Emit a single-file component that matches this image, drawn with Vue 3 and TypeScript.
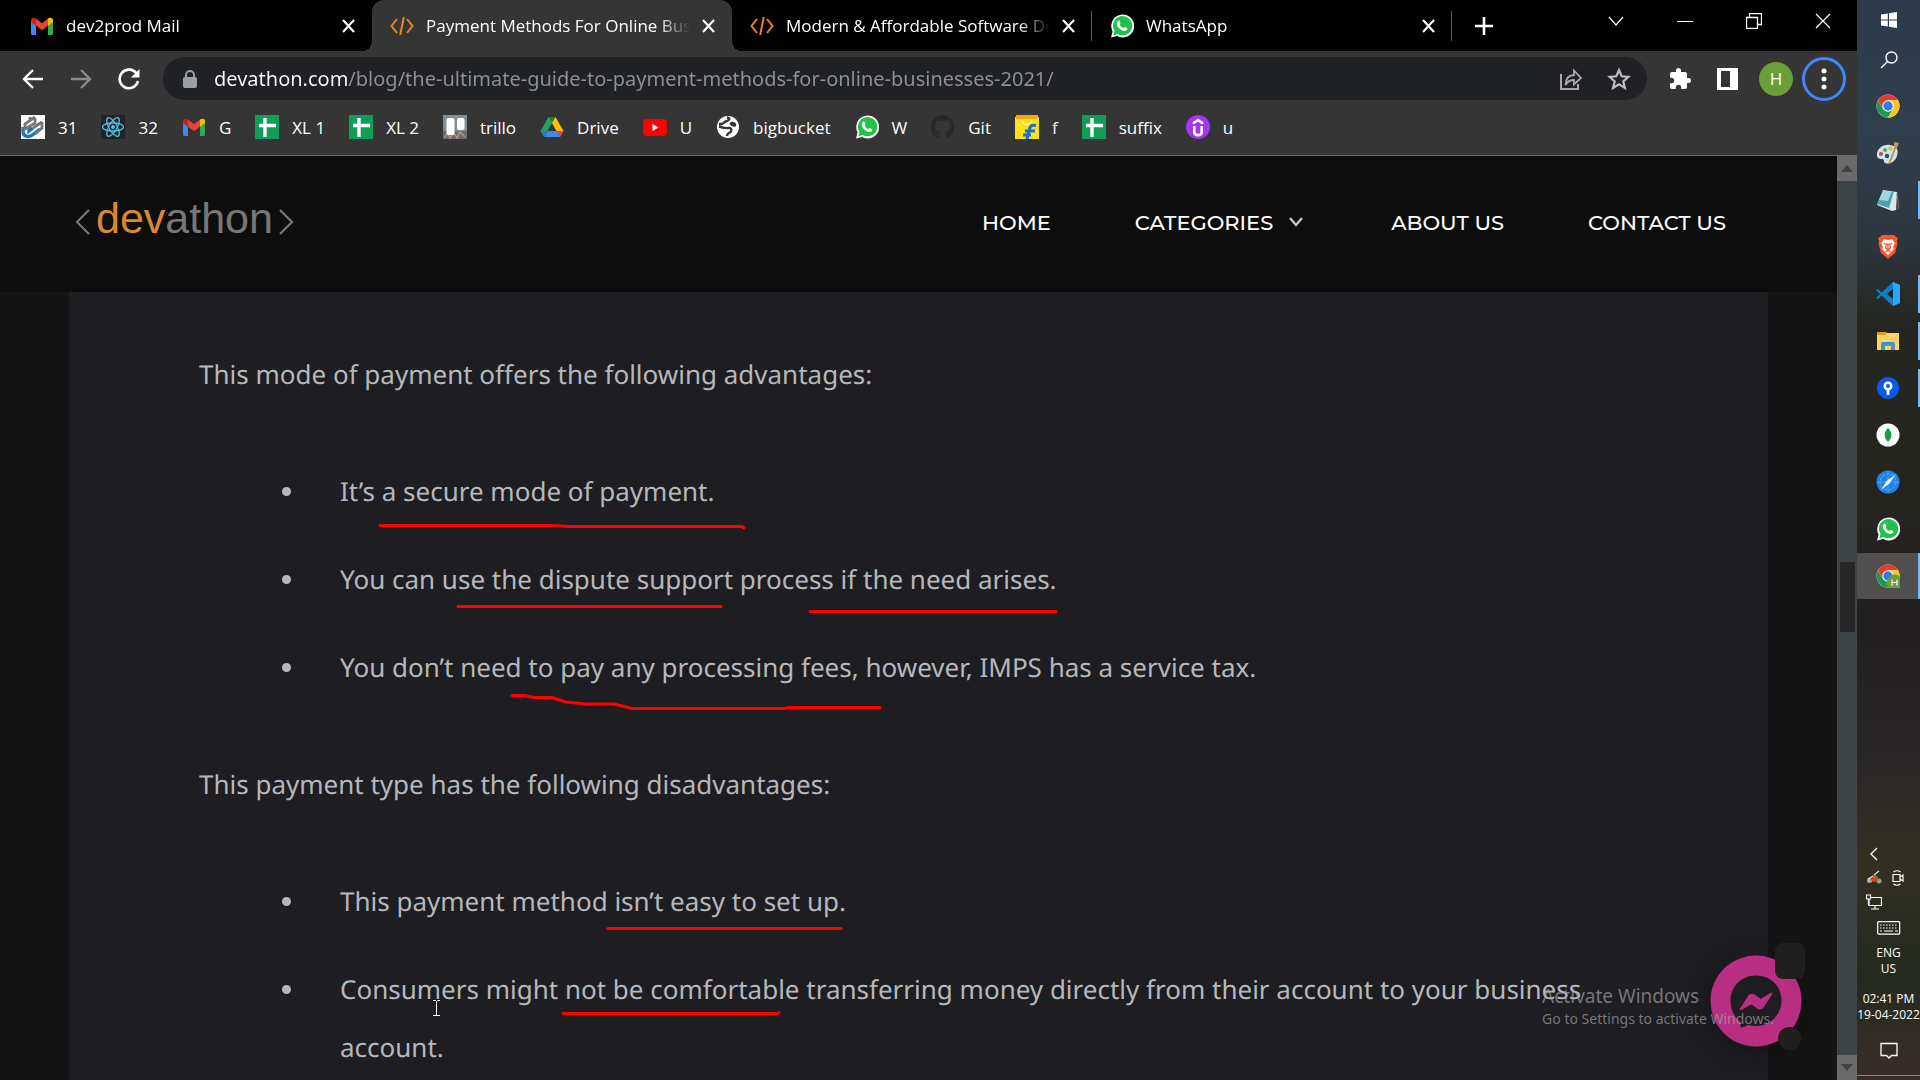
<script setup lang="ts">
import { ref } from 'vue'

interface Tab { title: string; icon: string; active?: boolean; divider?: boolean }
interface Bookmark { label: string; icon: string }
interface TaskItem { name: string; icon: string; running?: boolean; current?: boolean }

const whatsapp = '<path d="M1 23.500 2.600 17.500A11.500 11.500 0 1 1 7 22z" fill="#fff"/><path d="M3.300 21.200 4.600 17A9.600 9.600 0 1 1 7.800 20z" fill="#1fc24c"/><path d="M8 6.800c.5-.5 1.200-.5 1.500.1l.9 2c.2.5-.9 1.400-.7 1.800.7 1.500 1.900 2.600 3.500 3.300.4.200 1.300-1.300 1.800-1l2 1c.5.300.3 1.400-.1 2-2.400 2.400-6.300.1-8.300-2.200C6.800 11.700 6 8.800 8 6.800z" fill="#fff"/>'
const gmail = '<path d="M1 6v13.500c0 .8.700 1.500 1.500 1.500H6V10.500z" fill="#4285f4"/><path d="M18 10.500V21h3.500c.8 0 1.500-.7 1.500-1.500V6z" fill="#34a853"/><path d="M6 4.500v7l6 4.700 6-4.700v-7l-6 4.700z" fill="#ea4335"/><path d="M1 6v2l5 3.700V4.500C4 3 1 3.500 1 6z" fill="#c5221f"/><path d="M23 6v2l-5 3.700V4.500c2-1.500 5-1 5 1.500z" fill="#fbbc04"/>'
const code = '<path d="M7 5 1.500 12 7 19M17 5l5.500 7-5.500 7M13.800 3l-3.600 18" fill="none" stroke="#e8851c" stroke-width="2"/>'
const sheet = '<path d="M0 0h24v24H0z" fill="#109d58"/><path d="M10 3v19M4 10.500h17" stroke="#fff" stroke-width="3.400"/>'
const chrome = '<circle cx="12" cy="12" r="11.500" fill="#fff"/><path d="M12 .5a11.500 11.500 0 0 1 10 5.800H12L7 15 2 6.300A11.500 11.500 0 0 1 12 .5z" fill="#e33b2e"/><path d="M2 6.300A11.500 11.500 0 0 0 12 23.500l5-8.600-5 2.200-5-2.200z" fill="#1f9a4c"/><path d="M22 6.300A11.500 11.500 0 0 1 12 23.500l5-8.600V9l-5-2.700z" fill="#fcc31d"/><circle cx="12" cy="12" r="5.700" fill="#fff"/><circle cx="12" cy="12" r="4.700" fill="#2a7cf0"/>'

const icons: Record<string, string> = {
  whatsapp, gmail, code, sheet, chrome,
  school: '<path d="M0 0h24v24H0z" fill="#fff"/><path d="M2 12v4c0 6 6 7 10 3.500l7-5.500M8 12v4l4-3" fill="none" stroke="#2477b5" stroke-width="3.400"/><path d="M14 2 4 9v5l10-6V3M12 13l9-6M21 7v6l-7 6M9 2v4" fill="none" stroke="#77777a" stroke-width="2.800"/>',
  react: '<path d="M0 0h24v24H0z" fill="#20232a"/><circle cx="12" cy="12" r="2" fill="#53c1de"/><g fill="none" stroke="#53c1de" stroke-width="1.300"><ellipse cx="12" cy="12" rx="10.500" ry="4"/><ellipse cx="12" cy="12" rx="10.500" ry="4" transform="rotate(60 12 12)"/><ellipse cx="12" cy="12" rx="10.500" ry="4" transform="rotate(120 12 12)"/></g>',
  trello: '<path d="M0 0h24v24H0z" fill="#7f8d94"/><path d="M0 16h24v8H0z" fill="#756b62"/><path d="m2 22 3-4 2 5 4-5 3 5 3-6 5 5" fill="none" stroke="#a59a8f" stroke-width="1.500"/><rect x="3.500" y="3" width="8" height="17" rx="2" fill="#fff"/><rect x="14" y="3" width="7.500" height="12" rx="2" fill="#fff"/>',
  drive: '<path d="m8.500 2-8 14 3.500 6L12 8z" fill="#1da362"/><path d="M8.500 2h7l8 14h-7z" fill="#ffc107"/><path d="m4.500 22 3.500-6h15.500L20 22z" fill="#4285f4"/><path d="m17 16h6.500L20 22z" fill="#ea4335"/><path d="m.5 16 4 6L8 16z" fill="#2b6fe3"/><path d="m12 8-3.500-6h7z" fill="#188038"/>',
  youtube: '<rect y="4" width="24" height="17" rx="4" fill="#f00"/><path d="m9.500 9 6 3.500-6 3.500z" fill="#fff"/>',
  globe: '<circle cx="12" cy="12" r="11" fill="#fff"/><path d="M11 2.500c3 .5 3 2.500 0 3.500s-3 2-5 3l-3 0M3 11.500c3 1 6 2 9 1.500s4 1.500 3 3.500-4 1-4 4.500" fill="none" stroke="#353535" stroke-width="2.400"/><path d="M14 7.500c2-1.500 5-1 6 1.500 1 3-1 3-3 2.500s-4-2-3-4z" fill="#353535"/>',
  github: '<path d="M12 0a12 12 0 0 0-4 23.400c.6.100.8-.3.800-.6v-2.200c-3.300.7-4-1.500-4-1.500-.6-1.400-1.400-1.800-1.400-1.800-1.100-.7.100-.7.100-.7 1.200.1 1.900 1.200 1.900 1.200 1 1.900 2.800 1.300 3.500 1 .1-.8.400-1.300.8-1.600-2.700-.3-5.500-1.300-5.500-5.900 0-1.300.5-2.400 1.200-3.200 0-.3-.5-1.500.2-3.200 0 0 1-.3 3.300 1.200a11.500 11.500 0 0 1 6 0C17 4.600 18 4.900 18 4.900c.7 1.700.3 2.900.1 3.200.8.800 1.200 1.900 1.200 3.200 0 4.600-2.800 5.600-5.500 5.900.4.400.8 1.100.8 2.200v3.300c0 .3.200.7.800.6A12 12 0 0 0 12 0z" fill="#24292e"/>',
  flipkart: '<path d="M0 2h24v22H0z" fill="#fce313"/><path d="M1 0h22v4H1z" fill="#f5a80c"/><path d="M7 5c1 6 9 6 10 0" fill="none" stroke="#fff8a8" stroke-width="1.500"/><path d="M21 10.500c-5-1-6 .5-7 5.500l-2 8M10 16h10M8 20h8" fill="none" stroke="#1b6fd6" stroke-width="3"/>',
  udemy: '<circle cx="12" cy="12" r="12" fill="#a435f0"/><path d="M8.300 11v6c0 4.200 7.400 4.200 7.400 0v-6M7 8.500l5-3.500 5 3.500" fill="none" stroke="#fff" stroke-width="2.600"/>',
  windows: '<path d="M4 6.500 10.800 5.500v6H4zM12 5.300 20 4v7.500h-8zM4 12.500h6.800v6L4 17.500zM12 12.500h8V20l-8-1.300z" fill="#fff"/>',
  search: '<circle cx="14.500" cy="9.500" r="5.500" fill="none" stroke="#fff" stroke-width="1.400"/><path d="M10.500 13.500 4 20" stroke="#fff" stroke-width="1.400"/>',
  paint: '<path d="M1 15C0 8 7 3 14 4c7 1 9 5 7 11s-8 9-12 7c-2-1 0-4-3-4-2 0-4 0-5-3z" fill="#c8e3f3"/><circle cx="5" cy="13" r="2" fill="#d94040"/><circle cx="9" cy="9" r="2" fill="#58ac47"/><circle cx="14.500" cy="7.500" r="2" fill="#edb53a"/><circle cx="11" cy="15" r="2.200" fill="#30506a"/><path d="M20 5 13 23" stroke="#da8432" stroke-width="1.800"/><path d="m18 1 5 1-2 5-3-1z" fill="#bf9262"/>',
  notepad: '<path d="m7 2 14 2-1 18-4 1L1 17z" fill="#dbe6e9"/><path d="M7 3h11l-5 17L1 16z" fill="#4ba3b4"/><path d="m7 3 9 0-4 10L3 12z" fill="#a3d5dc"/><path d="m21 5 1.500 15-2 2" fill="none" stroke="#87734a"/>',
  brave: '<path d="m6 0 12 0 2 2 2 1-1 3 .5 3-2.500 9-7 6-7-6L2.500 9 3 6 2 3l2-1z" fill="#fb542b"/><path d="m8 4 4 1 4-1 3 4-2 4 1 2-6 6-6-6 1-2-2-4z" fill="#fff"/><path d="m7.500 8.500 3 1-1 3 2.500 3 2.500-3-1-3 3-1M9.500 17l2.500-1.300 2.500 1.300M12 8v7" fill="none" stroke="#fb542b" stroke-width="1.300"/>',
  vscode: '<path d="m17 0 7 3v18l-7 3L5.500 13.500 2 17 0 16l4-4-4-4 2-1 3.500 3.500z" fill="#0e7fc9"/><path d="M17 0v24l7-3V3z" fill="#28a8f2"/><path d="m17 7-6 5 6 5z" fill="#25261f"/>',
  folder: '<path d="M1 3h9l1 1h12v17H1z" fill="#fbd368"/><path d="M1 3h9v3H1z" fill="#df9c0a"/><path d="M5 21v-6q0-2 2-2h10q2 0 2 2v6h-4v-4H9v4z" fill="#3d93d4"/>',
  sourcetree: '<circle cx="12" cy="12" r="11" fill="#0b59e8"/><circle cx="12" cy="10" r="3.300" fill="none" stroke="#fff" stroke-width="2.400"/><path d="M12 14v5" stroke="#fff" stroke-width="2.800"/>',
  mongo: '<circle cx="12" cy="12" r="11.500" fill="#fff"/><path d="M12 5c5 5 4 10 0 14-4-4-5-9 0-14z" fill="#159a4e"/>',
  safari: '<circle cx="12" cy="12" r="11.500" fill="#1d82ea"/><circle cx="12" cy="12" r="8" fill="none" stroke="#6db5f5" stroke-dasharray="3 1.500"/><path d="M12 1v22M1 12h22" stroke="#54a5f2" stroke-width=".8"/><path d="m20 4-6.500 9.500L5 20l5.500-9z" fill="#e6f2fc"/>',
  chromeProfile: chrome + '<circle cx="18.500" cy="18.500" r="8" fill="#689f38"/><path d="M16 15.500v6M21 15.500v6M16 18.500h5" stroke="#fff" stroke-width="1.200"/>',
}

const tabs: Tab[] = [
  { title: 'dev2prod Mail', icon: 'gmail' },
  { title: 'Payment Methods For Online Businesses', icon: 'code', active: true },
  { title: 'Modern & Affordable Software Development', icon: 'code', divider: true },
  { title: 'WhatsApp', icon: 'whatsapp', divider: true },
]

const bookmarks: Bookmark[] = [
  { label: '31', icon: 'school' },
  { label: '32', icon: 'react' },
  { label: 'G', icon: 'gmail' },
  { label: 'XL 1', icon: 'sheet' },
  { label: 'XL 2', icon: 'sheet' },
  { label: 'trillo', icon: 'trello' },
  { label: 'Drive', icon: 'drive' },
  { label: 'U', icon: 'youtube' },
  { label: 'bigbucket', icon: 'globe' },
  { label: 'W', icon: 'whatsapp' },
  { label: 'Git', icon: 'github' },
  { label: 'f', icon: 'flipkart' },
  { label: 'suffix', icon: 'sheet' },
  { label: 'u', icon: 'udemy' },
]

const taskItems: TaskItem[] = [
  { name: 'Chrome', icon: 'chrome' },
  { name: 'Paint', icon: 'paint' },
  { name: 'Notepad', icon: 'notepad', running: true },
  { name: 'Brave', icon: 'brave' },
  { name: 'Visual Studio Code', icon: 'vscode', running: true },
  { name: 'File Explorer', icon: 'folder', running: true },
  { name: 'Sourcetree', icon: 'sourcetree', running: true },
  { name: 'MongoDB Compass', icon: 'mongo' },
  { name: 'Safari', icon: 'safari' },
  { name: 'WhatsApp', icon: 'whatsapp' },
  { name: 'Chrome, profile H', icon: 'chromeProfile', current: true },
]

const advantages = [
  'It’s a secure mode of payment.',
  'You can use the dispute support process if the need arises.',
  'You don’t need to pay any processing fees, however, IMPS has a service tax.',
]
const disadvantages = [
  'This payment method isn’t easy to set up.',
  'Consumers might not be comfortable transferring money directly from their account to your business account.',
]

const address = ref('devathon.com/blog/the-ultimate-guide-to-payment-methods-for-online-businesses-2021/')
</script>

<template>
  <div class="desktop">
    <div class="window">
      <header class="tabstrip">
        <div v-for="tab in tabs" :key="tab.title" class="tab" :class="{ active: tab.active, divider: tab.divider }">
          <svg class="icon" viewBox="0 0 24 24" v-html="icons[tab.icon]"></svg>
          <span class="tab-title">{{ tab.title }}</span>
          <button class="plain" :aria-label="'Close ' + tab.title">
            <svg width="13" height="14" viewBox="0 0 13 14"><path d="m1 1 11 12M12 1 1 13" stroke="#fff" stroke-width="2.200" /></svg>
          </button>
        </div>
        <button class="plain new-tab" aria-label="New tab">
          <svg width="18" height="18" viewBox="0 0 18 18"><path d="M9 0v18M0 9h18" stroke="#fff" stroke-width="2.600" /></svg>
        </button>
        <div class="window-controls">
          <button class="plain" aria-label="Search tabs">
            <svg width="16" height="16" viewBox="0 0 16 16"><path d="m1 4 7 8 7-8" fill="none" stroke="#fff" stroke-width="1.200" /></svg>
          </button>
          <button class="plain" aria-label="Minimize">
            <svg width="16" height="16" viewBox="0 0 16 16"><path d="M0 8.500h16" stroke="#fff" /></svg>
          </button>
          <button class="plain" aria-label="Restore">
            <svg width="16" height="16" viewBox="0 0 16 16"><path d="M.5 4.500h11v11H.5zM3.500 4V.5h12v11H12" fill="none" stroke="#fff" stroke-width="1.300" /></svg>
          </button>
          <button class="plain" aria-label="Close">
            <svg width="16" height="16" viewBox="0 0 16 16"><path d="m1 1 14 14M15 1 1 15" stroke="#fff" stroke-width="1.200" /></svg>
          </button>
        </div>
      </header>

      <div class="toolbar">
        <button class="plain tool" aria-label="Back">
          <svg width="22" height="22" viewBox="0 0 22 22"><path d="M21 11H2.500M11 2l-9 9 9 9" fill="none" stroke="#fff" stroke-width="2.400" /></svg>
        </button>
        <button class="plain tool" aria-label="Forward">
          <svg width="22" height="22" viewBox="0 0 22 22"><path d="M1 11h18.500M11 2l9 9-9 9" fill="none" stroke="#8b8b8b" stroke-width="2.400" /></svg>
        </button>
        <button class="plain tool" aria-label="Reload">
          <svg width="22" height="22" viewBox="0 0 22 22"><path d="M18.500 5.500A9.300 9.300 0 1 0 20 13" fill="none" stroke="#fff" stroke-width="2.600" /><path d="M21.500 1v8.500H13z" fill="#fff" /></svg>
        </button>
        <div class="address">
          <svg width="14" height="18" viewBox="0 0 14 18"><path d="M3 8V5a4 4 0 0 1 8 0v3" fill="none" stroke="#9aa0a6" stroke-width="2" /><rect y="7" width="14" height="11" rx="2" fill="#9aa0a6" /></svg>
          <input v-model="address" type="text" aria-label="Address" spellcheck="false" />
          <button class="plain tool" aria-label="Share">
            <svg width="24" height="24" viewBox="0 0 24 24"><path d="M2 7v15h17v-5" fill="none" stroke="#a8a8a8" stroke-width="2" /><path d="M6.500 18C7 11 10 8 15 8V3.500l7 7.500-7 6.500v-4.500c-4 0-6.500 1.500-8.500 5z" fill="none" stroke="#a8a8a8" stroke-width="1.800" /></svg>
          </button>
          <button class="plain tool" aria-label="Bookmark this page">
            <svg width="24" height="24" viewBox="0 0 24 24"><path d="m12 3 2.700 6.300 6.800.5-5.200 4.500 1.600 6.700-5.900-3.600L6.100 21l1.600-6.700L2.500 9.800l6.800-.5z" fill="none" stroke="#bdbdbd" stroke-width="2.200" /></svg>
          </button>
        </div>
        <button class="plain tool" aria-label="Extensions">
          <svg width="24" height="24" viewBox="0 0 24 24"><path d="M20.500 11H19V7a2 2 0 0 0-2-2h-4V3.500a2.500 2.500 0 0 0-5 0V5H4a2 2 0 0 0-2 2v3.800h1.500a2.700 2.700 0 0 1 0 5.400H2V20a2 2 0 0 0 2 2h3.800v-1.500a2.700 2.700 0 0 1 5.400 0V22H17a2 2 0 0 0 2-2v-4h1.500a2.500 2.500 0 0 0 0-5z" fill="#fff" /></svg>
        </button>
        <button class="plain tool" aria-label="Side panel">
          <svg width="22" height="22" viewBox="0 0 22 22"><path d="M0 0h21v22H0zM4 3v16h9V3z" fill="#fff" fill-rule="evenodd" /></svg>
        </button>
        <button class="plain tool" aria-label="Profile"><span class="avatar">H</span></button>
        <button class="plain tool" aria-label="Menu">
          <span class="menu-ring"><svg width="6" height="22" viewBox="0 0 6 22"><g fill="#fff"><circle cx="3" cy="3" r="2.500" /><circle cx="3" cy="11" r="2.500" /><circle cx="3" cy="19" r="2.500" /></g></svg></span>
        </button>
      </div>

      <nav class="bookmarks" aria-label="Bookmarks">
        <a v-for="mark in bookmarks" :key="mark.label" href="#">
          <svg class="icon" viewBox="0 0 24 24" v-html="icons[mark.icon]"></svg>
          <span>{{ mark.label }}</span>
        </a>
      </nav>

      <div class="viewport">
        <div class="page">
          <header class="site-header">
            <a class="logo" href="#">
              <svg width="16" height="28" viewBox="0 0 16 28"><path d="M14 2 2 14l12 12" fill="none" stroke="#777" stroke-width="2.200" /></svg>
              <span><b>dev</b>athon</span>
              <svg width="16" height="28" viewBox="0 0 16 28"><path d="m2 2 12 12L2 26" fill="none" stroke="#777" stroke-width="2.200" /></svg>
            </a>
            <nav class="site-nav" aria-label="Main">
              <a href="#">HOME</a>
              <a href="#">CATEGORIES
                <svg width="18" height="10" viewBox="0 0 18 10"><path d="m1 1 6 7 6-7" fill="none" stroke="#c8c8c8" stroke-width="2.400" /></svg>
              </a>
              <a href="#">ABOUT US</a>
              <a href="#">CONTACT US</a>
            </nav>
          </header>
          <main class="article">
            <p>This mode of payment offers the following advantages:</p>
            <ul>
              <li v-for="item in advantages" :key="item">{{ item }}</li>
            </ul>
            <p>This payment type has the following disadvantages:</p>
            <ul>
              <li v-for="item in disadvantages" :key="item">{{ item }}</li>
            </ul>
          </main>
        </div>
        <div class="scrollbar" aria-hidden="true">
          <div class="scroll-end"><svg width="12" height="7" viewBox="0 0 12 7"><path d="m6 0 6 7H0z" fill="#3e4446" /></svg></div>
          <div class="scroll-track"><div class="scroll-thumb"></div></div>
          <div class="scroll-end"><svg width="12" height="7" viewBox="0 0 12 7"><path d="m6 7 6-7H0z" fill="#3e4446" /></svg></div>
        </div>

        <button class="plain messenger" aria-label="Chat">
          <svg width="92" height="92" viewBox="0 0 92 92">
            <circle cx="46" cy="46" r="45.500" fill="#b82e82" />
            <path d="M46 20.500c15 0 25.500 11 25.500 25s-11 25.500-25.500 25.500c-3 0-5-.3-8-1l-6 2.500c-1.500 0-1.500-1-1.500-5.500C24 62 20.500 54 20.500 46c0-14.500 11-25.500 25.500-25.500z" fill="#1e1d22" />
            <path d="m30 53.500 8-12.500c1.500-2.500 4.500-3 7-1.300l5.500 4.300 10-6c1.500-.8 2.500 0 1.500 1.500l-8.500 13c-1.500 2.200-4.500 2.500-6.500 1l-5.500-4.200-9.500 5.500c-2 1-3 .2-2-1.300z" fill="#b82e82" />
          </svg>
          <span class="chat-close"></span>
          <span class="chat-dot"></span>
        </button>
        <div class="watermark">
          <div class="watermark-title">Activate Windows</div>
          <div>Go to Settings to activate Windows.</div>
        </div>
      </div>

      <svg class="ink" width="1857" height="1080" viewBox="0 0 1857 1080" aria-hidden="true">
        <g fill="none" stroke="#f00" stroke-width="3" stroke-linecap="round" stroke-linejoin="round">
          <path d="M380 525.500h172l18 1h172l2 1.500" />
          <path d="M458 606.500h263" />
          <path d="M810 611.500h246" />
          <path d="M512 695.500h12l10 2h18l14 4.500 20 2h28l18 4.500h153l3-1h92" />
          <path d="M608 928.500h233" />
          <path d="M563 1013.500h215l1-1" />
        </g>
        <path d="M433 1000.500h2.500l1 1 1-1h2.500M436.500 1001v14M433 1015.500h7" fill="none" stroke="#fff" />
      </svg>
    </div>

    <aside class="taskbar">
      <button class="plain start" aria-label="Start"><svg class="icon" viewBox="0 0 24 24" v-html="icons.windows"></svg></button>
      <button class="plain start" aria-label="Search"><svg class="icon" viewBox="0 0 24 24" v-html="icons.search"></svg></button>
      <button
        v-for="item in taskItems" :key="item.name" class="plain task"
        :class="{ running: item.running, current: item.current }" :aria-label="item.name"
      >
        <svg class="icon" viewBox="0 0 24 24" v-html="icons[item.icon]"></svg>
      </button>
      <div class="tray">
        <div class="tray-grid">
          <button class="plain" aria-label="Show hidden icons">
            <svg width="16" height="16" viewBox="0 0 16 16"><path d="M11 2 5 8l6 6" fill="none" stroke="#fff" stroke-width="1.400" /></svg>
          </button>
          <span></span>
          <svg width="16" height="16" viewBox="0 0 16 16"><circle cx="3.500" cy="10.500" r="2.500" fill="#b9a9a0" /><circle cx="13" cy="11" r="2.500" fill="#9c9c98" /><circle cx="8.500" cy="8.500" r="3.500" fill="#d8402f" /><path d="m8 5 5-4M2 9l5-3" stroke="#ddd" stroke-width="1.300" /></svg>
          <svg width="16" height="16" viewBox="0 0 16 16"><path d="M3 4.500h7v7H3zM10 7l3-2v6l-3-2M3.500 2Q7-.5 10.500 2M3.500 14q3.500 2.500 7 0" fill="none" stroke="#fff" stroke-width="1.200" /></svg>
          <svg width="16" height="16" viewBox="0 0 16 16"><path d="M5 3.500h10.500v8H3V6M9 12v3M5 15h8M.5 1h4v4h-4zM2.500 5v6" fill="none" stroke="#fff" stroke-width="1.200" /></svg>
        </div>
        <svg width="24" height="14" viewBox="0 0 24 14"><rect x=".7" y=".7" width="22" height="12.500" rx="1" fill="none" stroke="#fff" stroke-width="1.200" /><path d="M3 4h18M3 7h18" stroke="#fff" stroke-dasharray="1.500 1.500" /><path d="M3 10h2M7 10h9M18 10h3" stroke="#fff" /></svg>
        <div class="lang">ENG<br />US</div>
        <div class="clock">02:41 PM<br />19-04-2022</div>
        <button class="plain notifications" aria-label="Notifications">
          <svg width="18" height="18" viewBox="0 0 18 18"><path d="M1 1.500h16v12h-5.500L9 16l-2.500-2.500H1z" fill="none" stroke="#fff" stroke-width="1.300" /></svg>
        </button>
      </div>
    </aside>
  </div>
</template>

<style>
body {
  margin: 0;
  background: #141414;
}
</style>

<style scoped>
.desktop {
  display: flex;
  height: 100vh;
  overflow: hidden;
  font-family: "Open Sans", "Noto Sans", sans-serif;
  font-size: 17px;
  color: #fff;
}
.plain {
  display: flex;
  align-items: center;
  justify-content: center;
  padding: 0;
  border: 0;
  background: none;
  color: inherit;
  font: inherit;
}
a {
  color: inherit;
  text-decoration: none;
}
svg {
  display: block;
  flex: none;
}
.icon {
  width: 24px;
  height: 24px;
}
.window {
  position: relative;
  flex: 1;
  min-width: 0;
  display: flex;
  flex-direction: column;
}

.tabstrip {
  display: flex;
  height: 51px;
  padding-left: 12px;
  background: #000;
}
.tab {
  position: relative;
  flex: 0 1 360px;
  min-width: 0;
  box-sizing: border-box;
  display: flex;
  align-items: center;
  padding: 0 17px 0 18px;
}
.tab.active {
  border-radius: 12px 12px 0 0;
  background: #353535;
}
.tab.active::before,
.tab.active::after {
  content: "";
  position: absolute;
  bottom: 0;
  width: 10px;
  height: 10px;
}
.tab.active::before {
  right: 100%;
  background: radial-gradient(circle at 0 0, #000 10px, #353535 10px);
}
.tab.active::after {
  left: 100%;
  background: radial-gradient(circle at 100% 0, #000 10px, #353535 10px);
}
.tab.divider::after {
  content: "";
  position: absolute;
  right: 0;
  width: 1px;
  height: 30px;
  background: #5a5a5a;
}
.tab-title {
  flex: 1;
  min-width: 0;
  margin: 0 12px;
  overflow: hidden;
  white-space: nowrap;
  mask-image: linear-gradient(to left, transparent, #000 32px);
}
.new-tab {
  width: 64px;
}
.window-controls {
  display: flex;
  height: 42px;
  margin-left: auto;
}
.window-controls button {
  width: 69px;
}

.toolbar {
  display: flex;
  align-items: center;
  height: 55px;
  padding: 0 9px;
  background: #353535;
}
.tool {
  flex: none;
  width: 48px;
  height: 43px;
}
.address {
  flex: 1;
  min-width: 0;
  display: flex;
  align-items: center;
  height: 43px;
  margin: 0 9px 0 10px;
  padding: 0 4px 0 20px;
  border-radius: 22px;
  background: #202124;
}
.address input {
  flex: 1;
  min-width: 0;
  margin-left: 17px;
  padding: 0;
  border: 0;
  outline: 0;
  background: linear-gradient(to right, #fff 133px, #8f9194 133px);
  background-clip: text;
  color: transparent;
  font-family: "Noto Sans", sans-serif;
  font-size: 20px;
  line-height: 30px;
}
.avatar {
  width: 34px;
  border-radius: 50%;
  background: #689f38;
  line-height: 34px;
}
.menu-ring {
  box-sizing: border-box;
  display: flex;
  align-items: center;
  justify-content: center;
  width: 44px;
  height: 44px;
  border: 3px solid #4285f4;
  border-radius: 50%;
}

.bookmarks {
  display: flex;
  gap: 24px;
  height: 49px;
  padding-left: 21px;
  border-bottom: 1px solid #6a6a6a;
  background: #353535;
}
.bookmarks a {
  display: flex;
  align-items: center;
  gap: 13px;
  height: 42px;
  white-space: nowrap;
}

.viewport {
  position: relative;
  flex: 1;
  min-height: 0;
  display: flex;
}
.page {
  flex: 1;
  min-width: 0;
  overflow: hidden;
  background: #141414;
}
.site-header {
  display: flex;
  align-items: center;
  justify-content: space-between;
  height: 136px;
  padding: 0 111px 4px 75px;
  box-sizing: border-box;
  background: #0d0d0d;
}
.logo {
  display: flex;
  align-items: center;
  gap: 5px;
  padding-bottom: 8px;
  color: #777;
  font-family: "Liberation Sans", Arial, sans-serif;
  font-size: 43px;
  line-height: 50px;
}
.logo svg {
  margin-top: 8px;
}
.logo b {
  color: #dd872d;
  font-weight: 400;
}
.site-nav {
  display: flex;
  gap: 84px;
  font-family: Montserrat, Inter, sans-serif;
  font-size: 21px;
  font-weight: 500;
}
.site-nav a {
  display: flex;
  align-items: center;
  gap: 16px;
}
.article {
  display: flow-root;
  margin: 0 69px;
  padding: 53px 130px 0;
  background: #1e1d22;
  color: #b5b8bb;
  font-family: "Noto Sans", sans-serif;
  font-size: 26px;
  line-height: 58px;
  text-rendering: geometricPrecision;
}
.article p {
  margin: 0;
}
.article ul {
  display: grid;
  gap: 30px;
  margin: 59px 0;
  padding-left: 141px;
  list-style: none;
}
.article li {
  position: relative;
}
.article li::before {
  content: "";
  position: absolute;
  top: 25px;
  left: -58px;
  width: 9px;
  height: 9px;
  border-radius: 50%;
  background: #b5b8bb;
}

.scrollbar {
  display: flex;
  flex-direction: column;
  width: 20px;
  background: #3e4446;
}
.scroll-end {
  display: flex;
  align-items: center;
  justify-content: center;
  height: 25px;
  background: #6a6a6a;
}
.scroll-track {
  flex: 1;
  padding: 0 2px 0 3px;
}
.scroll-thumb {
  height: 8%;
  margin-top: 381px;
  background: #262626;
}

.messenger {
  position: absolute;
  right: 55px;
  bottom: 33px;
  border-radius: 50%;
  box-shadow: 0 4px 24px #0005;
}
.chat-close {
  position: absolute;
  top: -12px;
  right: -3px;
  width: 30px;
  height: 36px;
  border-radius: 8px;
  background: #1f1f1f;
}
.chat-dot {
  position: absolute;
  right: 1px;
  bottom: -3px;
  width: 23px;
  height: 23px;
  border-radius: 50%;
  background: #1f1f1f;
}
.watermark {
  position: absolute;
  right: 83px;
  bottom: 51px;
  color: #a0a0a0b0;
  font-family: "Noto Sans", sans-serif;
  font-size: 14px;
  line-height: 20px;
}
.watermark-title {
  font-size: 19px;
  line-height: 26px;
}
.ink {
  position: absolute;
  top: 0;
  left: 0;
  pointer-events: none;
}

.taskbar {
  flex: none;
  display: flex;
  flex-direction: column;
  width: 63px;
  background: linear-gradient(#2d3a49, #313e4c 12%, #2c3740 22%, #25261f 30%, #25251f 45%, #221f21 58%, #292627 70%, #332f23 80%, #232a1f 90%, #3b2d29);
}
.start {
  height: 40px;
}
.task {
  box-sizing: border-box;
  height: 38px;
  margin-bottom: 9px;
  border-right: 2px solid transparent;
}
.start + .task {
  margin-top: 7px;
}
.running {
  border-right-color: #76b9ed;
}
.current {
  height: 46px;
  margin-top: -4px;
  border-right-color: #76b9ed;
  background: #504f4d;
}
.tray {
  display: flex;
  flex-direction: column;
  align-items: center;
  width: 100%;
  margin-top: auto;
  margin-bottom: 4px;
  border-bottom: 1px solid #8a8580;
  font-size: 12px;
  line-height: 16px;
  text-align: center;
  white-space: nowrap;
}
.tray-grid {
  display: grid;
  grid-template-columns: 16px 16px;
  gap: 8px;
  margin: 0 6px 11px 0;
}
.lang {
  margin: 10px 0 14px;
}
.notifications {
  height: 52px;
  padding-top: 4px;
}
</style>
